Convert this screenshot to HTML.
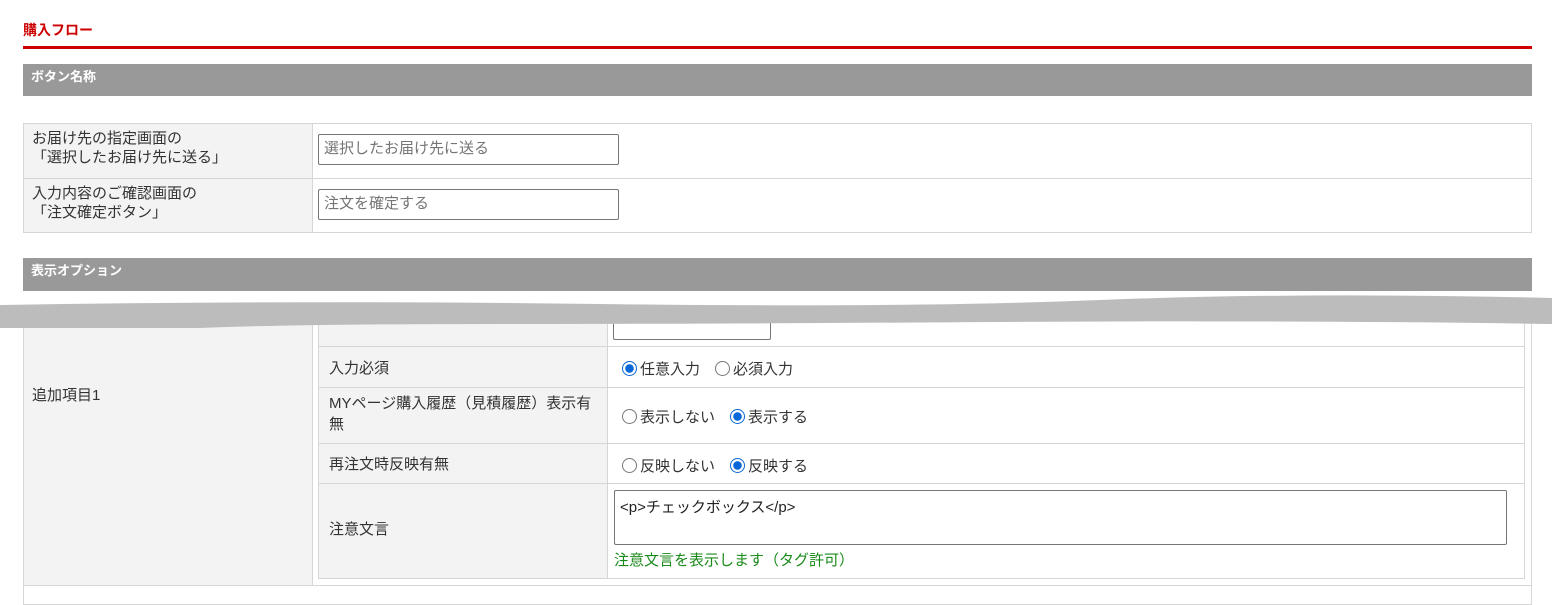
<!DOCTYPE html>
<html><head><meta charset="utf-8"><style>
body{margin:0;width:1552px;height:593px;overflow:hidden;background:#fff;font-family:"Liberation Sans","Noto Sans CJK JP",sans-serif;font-size:15px;color:#333;position:relative}
.a{position:absolute;box-sizing:border-box}
.lab{background:#f2f3f2}
.b{border:1px solid #d6d6d6}
.hd{background:#999;color:#fff;font-weight:bold;font-size:13px;padding-left:8px}
.inp{border:1px solid #767676;border-radius:2px;background:#fff;color:#757575;padding-left:5px;line-height:28px}
.r{display:inline-block;width:15px;height:15px;border-radius:50%;border:1px solid #767676;box-sizing:border-box;vertical-align:-2px;margin-right:3px}
.r.on{border:1.5px solid #0a67d8;background:radial-gradient(circle,#0a67d8 4px,#fff 4.5px)}
</style></head><body>
<div class="a" style="left:23px;top:20px;color:#c00;font-weight:bold;font-size:14px">購入フロー</div>
<div class="a" style="left:23px;top:46px;width:1509px;height:3px;background:#c00"></div>
<div class="a hd" style="left:23px;top:64px;width:1509px;height:32px;line-height:26px">ボタン名称</div>

<div class="a b" style="left:23px;top:123px;width:1509px;height:110px"></div>
<div class="a b lab" style="left:23px;top:123px;width:290px;height:56px;padding:5px 8px;line-height:19px">お届け先の指定画面の<br>「選択したお届け先に送る」</div>
<div class="a b lab" style="left:23px;top:178px;width:290px;height:55px;padding:5px 8px;line-height:19px">入力内容のご確認画面の<br>「注文確定ボタン」</div>
<div class="a b" style="left:312px;top:178px;width:1220px;height:1px;border-width:1px 0 0 0"></div>
<div class="a inp" style="left:318px;top:134px;width:301px;height:31px">選択したお届け先に送る</div>
<div class="a inp" style="left:318px;top:189px;width:301px;height:31px">注文を確定する</div>

<div class="a hd" style="left:23px;top:258px;width:1509px;height:33px;line-height:26px">表示オプション</div>

<div class="a b lab" style="left:23px;top:320px;width:290px;height:266px;padding-left:8px;line-height:150px">追加項目1</div>
<div class="a b" style="left:312px;top:320px;width:1220px;height:266px"></div>
<div class="a b" style="left:318px;top:320px;width:1207px;height:259px"></div>
<div class="a b lab" style="left:318px;top:320px;width:290px;height:27px"></div>
<div class="a inp" style="left:613px;top:318px;width:158px;height:22px"></div>
<div class="a b lab" style="left:318px;top:346px;width:290px;height:42px;padding:10px 10px">入力必須</div>
<div class="a b" style="left:607px;top:346px;width:918px;height:42px;padding:11px 14px"><span class="r on"></span>任意入力　<span class="r"></span>必須入力</div>
<div class="a b lab" style="left:318px;top:387px;width:290px;height:57px;padding:5px 10px;line-height:21px">MYページ購入履歴（見積履歴）表示有無</div>
<div class="a b" style="left:607px;top:387px;width:918px;height:57px;padding:18px 14px"><span class="r"></span>表示しない　<span class="r on"></span>表示する</div>
<div class="a b lab" style="left:318px;top:443px;width:290px;height:41px;padding:9px 10px">再注文時反映有無</div>
<div class="a b" style="left:607px;top:443px;width:918px;height:41px;padding:11px 14px"><span class="r"></span>反映しない　<span class="r on"></span>反映する</div>
<div class="a b lab" style="left:318px;top:483px;width:290px;height:96px;padding-left:10px;line-height:92px">注意文言</div>
<div class="a b" style="left:607px;top:483px;width:918px;height:96px"></div>
<div class="a" style="left:614px;top:490px;width:893px;height:55px;border:1px solid #767676;border-radius:2px;padding:5px 5px;color:#222">&lt;p&gt;チェックボックス&lt;/p&gt;</div>
<div class="a" style="left:614px;top:549px;color:#1a8a1a">注意文言を表示します（タグ許可）</div>
<div class="a b" style="left:23px;top:585px;width:1509px;height:20px"></div>

<svg class="a" style="left:0;top:290px" width="1552" height="45"><path d="M0 15 Q300 10 600 14 T1100 10 T1552 8 L1552 34 Q1300 30 1000 32 T500 34 T200 38 L0 38 Z" fill="#bcbcbc"/></svg>
</body></html>
